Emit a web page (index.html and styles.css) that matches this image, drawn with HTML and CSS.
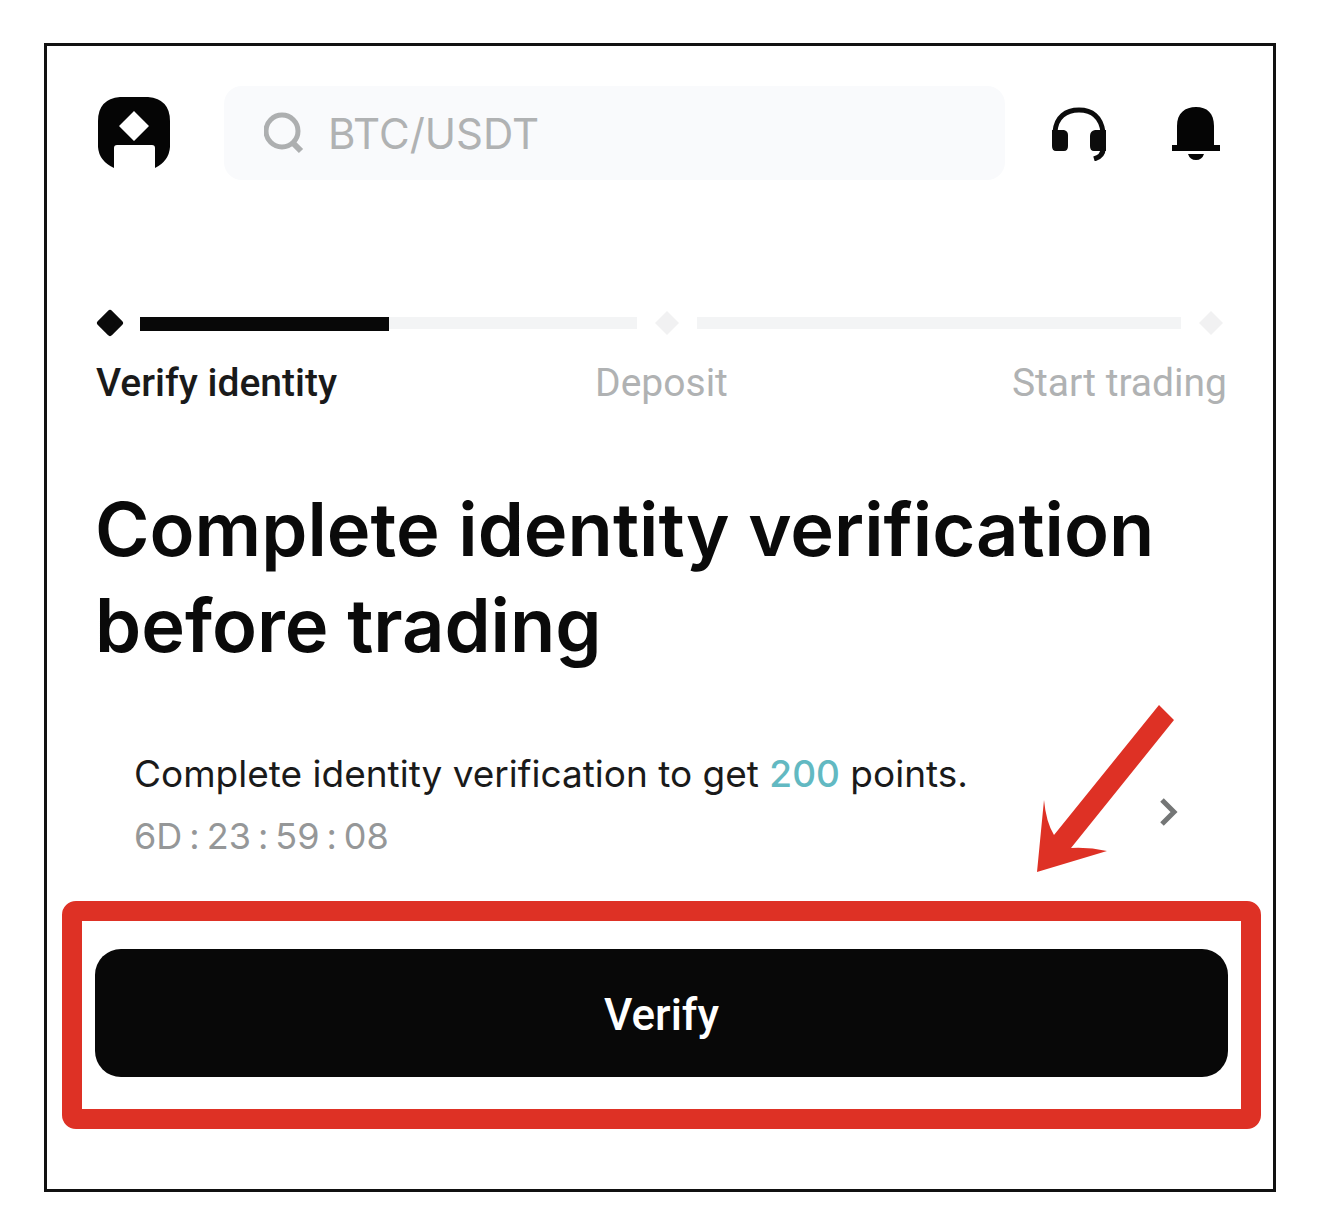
FILE: index.html
```html
<!DOCTYPE html>
<html lang="en">
<head>
    <meta charset="UTF-8">
    <meta name="viewport" content="width=device-width, initial-scale=1.0">
    <title>Verify identity</title>
    <link rel="stylesheet" href="styles.css">
</head>
<body>
    <main class="screen">
        <header class="topbar">
            <button class="icon-button" type="button" aria-label="Profile">
                <svg width="72" height="72" viewBox="0 0 72 72">
                    <path fill="#050505" fill-rule="evenodd" d="M22 0H50Q72 2 72 24V50Q71 64 57 71V51Q57 48 54 48H19Q16 48 16 51V71Q1 64 0 50V24Q0 2 22 0ZM36 14L21 29L36 44L51 29Z"/>
                </svg>
            </button>
            <div class="search">
                <svg width="40" height="42" viewBox="0 0 40 42" fill="none" stroke="#adafb0">
                    <circle cx="18" cy="19" r="16" stroke-width="5"/>
                    <path stroke-width="6" d="M28 30L37 39"/>
                </svg>
                <input type="text" placeholder="BTC/USDT" aria-label="Search">
            </div>
            <button class="icon-button" type="button" aria-label="Support">
                <svg width="56" height="56" viewBox="0 0 56 56">
                    <path fill="none" stroke="#0c0c0c" stroke-width="5" d="M4 27C5 12 15 5 28 5S50 12 52 27"/>
                    <path fill="#0c0c0c" d="M1 25H13Q17 26 17 30V41Q17 46 13 46H5Q1 46 1 41ZM55 25H44Q39 26 39 31V41Q39 46 43 46H55Z"/>
                    <path fill="none" stroke="#0c0c0c" stroke-width="5" d="M52 42Q53 51 43 54"/>
                </svg>
            </button>
            <button class="icon-button" type="button" aria-label="Notifications">
                <svg width="50" height="56" viewBox="0 0 50 56">
                    <path fill="#050505" d="M6 40V21C6 8 14 2 25 2S43 8 43 21V40H49V46H1V40ZM17 49H33Q31 55 25 55T17 49Z"/>
                </svg>
            </button>
        </header>

        <section class="steps">
            <div class="track">
                <svg width="28" height="28" viewBox="0 0 28 28"><path fill="#0a0a0a" stroke="#0a0a0a" stroke-width="6" stroke-linejoin="round" d="M14 4L24 14L14 24L4 14Z"/></svg>
                <div class="bar bar-current"><div class="bar-fill"></div></div>
                <svg width="28" height="28" viewBox="0 0 28 28"><path fill="#f1f1f2" d="M14 2L26 14L14 26L2 14Z"/></svg>
                <div class="bar"></div>
                <svg width="28" height="28" viewBox="0 0 28 28"><path fill="#f1f1f2" d="M14 2L26 14L14 26L2 14Z"/></svg>
            </div>
            <div class="labels">
                <span class="active">Verify identity</span>
                <span>Deposit</span>
                <span>Start trading</span>
            </div>
        </section>

        <h1>Complete identity verification before trading</h1>

        <section class="reward">
            <div>
                <p class="reward-text">Complete identity verification to get <span class="points">200</span> points.</p>
                <p class="countdown"><span>6D</span><span>:</span><span>23</span><span>:</span><span>59</span><span>:</span><span>08</span></p>
            </div>
            <svg class="chevron" width="20" height="30" viewBox="0 0 20 30" fill="none" stroke="#747676" stroke-width="5">
                <path d="M3 3L15 15L3 27"/>
            </svg>
            <svg class="arrow" width="138" height="168" viewBox="0 0 138 168">
                <path fill="#de3125" d="M122 0L137 15L34 143Q52 142 70 146L0 167L7 95Q9 117 17 130Z"/>
            </svg>
        </section>

        <div class="highlight">
            <button class="verify" type="button">Verify</button>
        </div>
    </main>
</body>
</html>
```
FILE: styles.css
```css
* {
    box-sizing: border-box;
}
body {
    margin: 0;
    padding: 43px 44px;
    background: #fff;
    font-family: Inter, Arial, sans-serif;
    color: #0a0a0a;
}
p, h1 {
    margin: 0;
}
svg {
    display: block;
    flex: none;
}
.screen {
    border: 3px solid #111;
    padding: 40px 12px 60px 15px;
}
.topbar {
    display: flex;
    align-items: center;
    padding: 0 40px 0 36px;
}
.icon-button {
    padding: 0;
    border: none;
    background: none;
    cursor: pointer;
}
.search {
    flex: 1;
    display: flex;
    align-items: center;
    gap: 24px;
    min-width: 0;
    height: 94px;
    margin: 0 46px 0 54px;
    padding: 0 40px;
    border-radius: 18px;
    background: #f9fafc;
}
.search input {
    flex: 1;
    min-width: 0;
    padding: 0;
    border: none;
    outline: none;
    background: none;
    font-family: Inter, Arial, sans-serif;
    font-size: 42px;
}
.search input::placeholder {
    color: #b0b2b3;
    opacity: 1;
}
.icon-button + .icon-button {
    margin-left: 64px;
}
.steps {
    padding: 129px 34px 0;
}
.track {
    display: flex;
    align-items: center;
    gap: 16px;
    padding-right: 2px;
}
.bar {
    flex: 35;
    height: 12px;
    background: #f3f4f5;
}
.bar-current {
    flex: 36;
}
.bar-fill {
    width: 50%;
    height: 14px;
    background: #080808;
}
.labels {
    display: grid;
    grid-template-columns: 1fr auto 1fr;
    margin-top: 22px;
    font-family: Roboto, Arial, sans-serif;
    font-size: 39px;
    line-height: 48px;
    color: #b0b2b3;
}
.labels .active {
    font-weight: 500;
    color: #1a1a1a;
}
.labels span:last-child {
    text-align: right;
}
h1 {
    margin-top: 74px;
    padding: 0 33px;
    font-size: 74px;
    font-weight: 600;
    line-height: 96px;
}
.reward {
    position: relative;
    display: flex;
    align-items: center;
    justify-content: space-between;
    margin-top: 70px;
    padding: 0 82px 0 72px;
}
.reward-text {
    font-size: 37px;
    line-height: 62px;
    color: #1a1a1a;
}
.points {
    font-weight: 500;
    color: #62b9c2;
}
.countdown {
    display: flex;
    gap: 7px;
    font-size: 36px;
    line-height: 62px;
    color: #959798;
}
.chevron {
    margin-top: 14px;
}
.arrow {
    position: absolute;
    right: 86px;
    bottom: -6px;
}
.highlight {
    margin-top: 34px;
    padding: 28px 13px 32px;
    border: 20px solid #de3125;
    border-radius: 14px;
}
.verify {
    display: block;
    width: 100%;
    height: 128px;
    padding: 4px 0 0;
    border: none;
    border-radius: 26px;
    background: #080808;
    color: #fff;
    font-family: Roboto, Arial, sans-serif;
    font-size: 44px;
    font-weight: 500;
    cursor: pointer;
}
```
